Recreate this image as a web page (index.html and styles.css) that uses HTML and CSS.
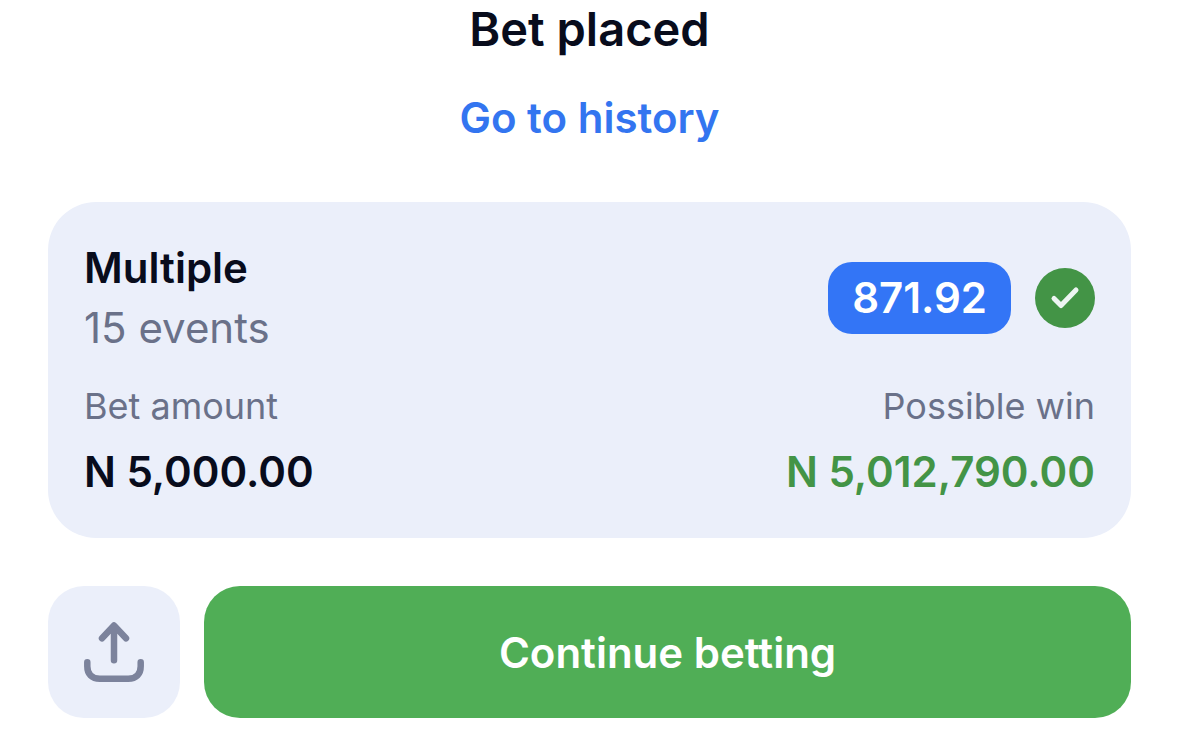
FILE: index.html
```html
<!DOCTYPE html>
<html lang="en">
<head>
  <meta charset="UTF-8">
  <meta name="viewport" content="width=device-width, initial-scale=1.0">
  <title>Bet placed</title>
  <link rel="stylesheet" href="styles.css">
</head>
<body>
  <main class="container">
    <h1>Bet placed</h1>
    <a class="history" href="#">Go to history</a>

    <section class="card">
      <div class="row">
        <div>
          <h2>Multiple</h2>
          <p class="events">15 events</p>
        </div>
        <div class="odds">
          <span class="badge">871.92</span>
          <svg class="check" viewBox="0 0 60 60" role="img" aria-label="Accepted">
            <circle cx="30" cy="30" r="30" fill="#439446"/>
            <path d="M19 30.5l7 7L41 22" fill="none" stroke="#edf5f2" stroke-width="5" stroke-linecap="round" stroke-linejoin="round"/>
          </svg>
        </div>
      </div>
      <div class="row amounts">
        <div>
          <p class="label">Bet amount</p>
          <p class="value">N 5,000.00</p>
        </div>
        <div class="win">
          <p class="label">Possible win</p>
          <p class="value">N 5,012,790.00</p>
        </div>
      </div>
    </section>

    <div class="actions">
      <button class="share" type="button" aria-label="Share">
        <svg viewBox="0 0 60 60" fill="none" stroke="#7c839c" stroke-width="6.5" stroke-linecap="round" stroke-linejoin="round">
          <path d="M30 38.3V4M18 16.3L30 3.5l12 12.8"/>
          <path d="M3.3 40.3v3.9c0 8 4.5 12.5 12.5 12.5h28.4c8 0 12.5-4.5 12.5-12.5v-3.9"/>
        </svg>
      </button>
      <button class="continue" type="button">Continue betting</button>
    </div>
  </main>
</body>
</html>
```

FILE: styles.css
```css
/* General Styles */
* {
  box-sizing: border-box;
}

body {
  margin: 0;
  background: #fff;
  color: #080c1c;
  font-family: Inter, 'Liberation Sans', sans-serif;
}

h1, h2, p {
  margin: 0;
}

.container {
  padding: 0 48px 24px;
  text-align: center;
}

h1 {
  font-size: 47px;
  line-height: 58px;
  font-weight: 600;
}

.history {
  display: block;
  width: fit-content;
  margin: 30px auto 54px;
  color: #3375f0;
  font-size: 42px;
  line-height: 60px;
  font-weight: 600;
  text-decoration: none;
}

/* Bet Card */
.card {
  padding: 36px;
  border-radius: 48px;
  background: #ebeffa;
  text-align: left;
}

.row {
  display: flex;
  justify-content: space-between;
}

h2, .events {
  font-size: 42px;
  line-height: 60px;
}

h2 {
  font-weight: 600;
}

.events {
  color: #6a7189;
}

.odds {
  display: flex;
  align-items: center;
  gap: 24px;
}

.badge {
  padding: 0 24px;
  border-radius: 24px;
  background: #3375f6;
  color: #fff;
  font-size: 42px;
  line-height: 72px;
  font-weight: 600;
}

.check {
  width: 60px;
  height: 60px;
}

.amounts {
  margin-top: 24px;
}

.label {
  color: #6a7189;
  font-size: 36px;
  line-height: 48px;
}

.value {
  margin-top: 12px;
  font-size: 42px;
  line-height: 60px;
  font-weight: 600;
}

.win {
  text-align: right;
}

.win .value {
  color: #439446;
}

/* Buttons */
.actions {
  display: flex;
  gap: 24px;
  margin-top: 48px;
}

button {
  height: 132px;
  border: none;
  border-radius: 36px;
  cursor: pointer;
}

.share {
  width: 132px;
  padding: 36px;
  background: #ebeffa;
}

.share svg {
  display: block;
  width: 60px;
  height: 60px;
  overflow: visible;
}

.continue {
  flex: 1;
  background: #50ae56;
  color: #fff;
  font-family: inherit;
  font-size: 42px;
  font-weight: 600;
}
```
